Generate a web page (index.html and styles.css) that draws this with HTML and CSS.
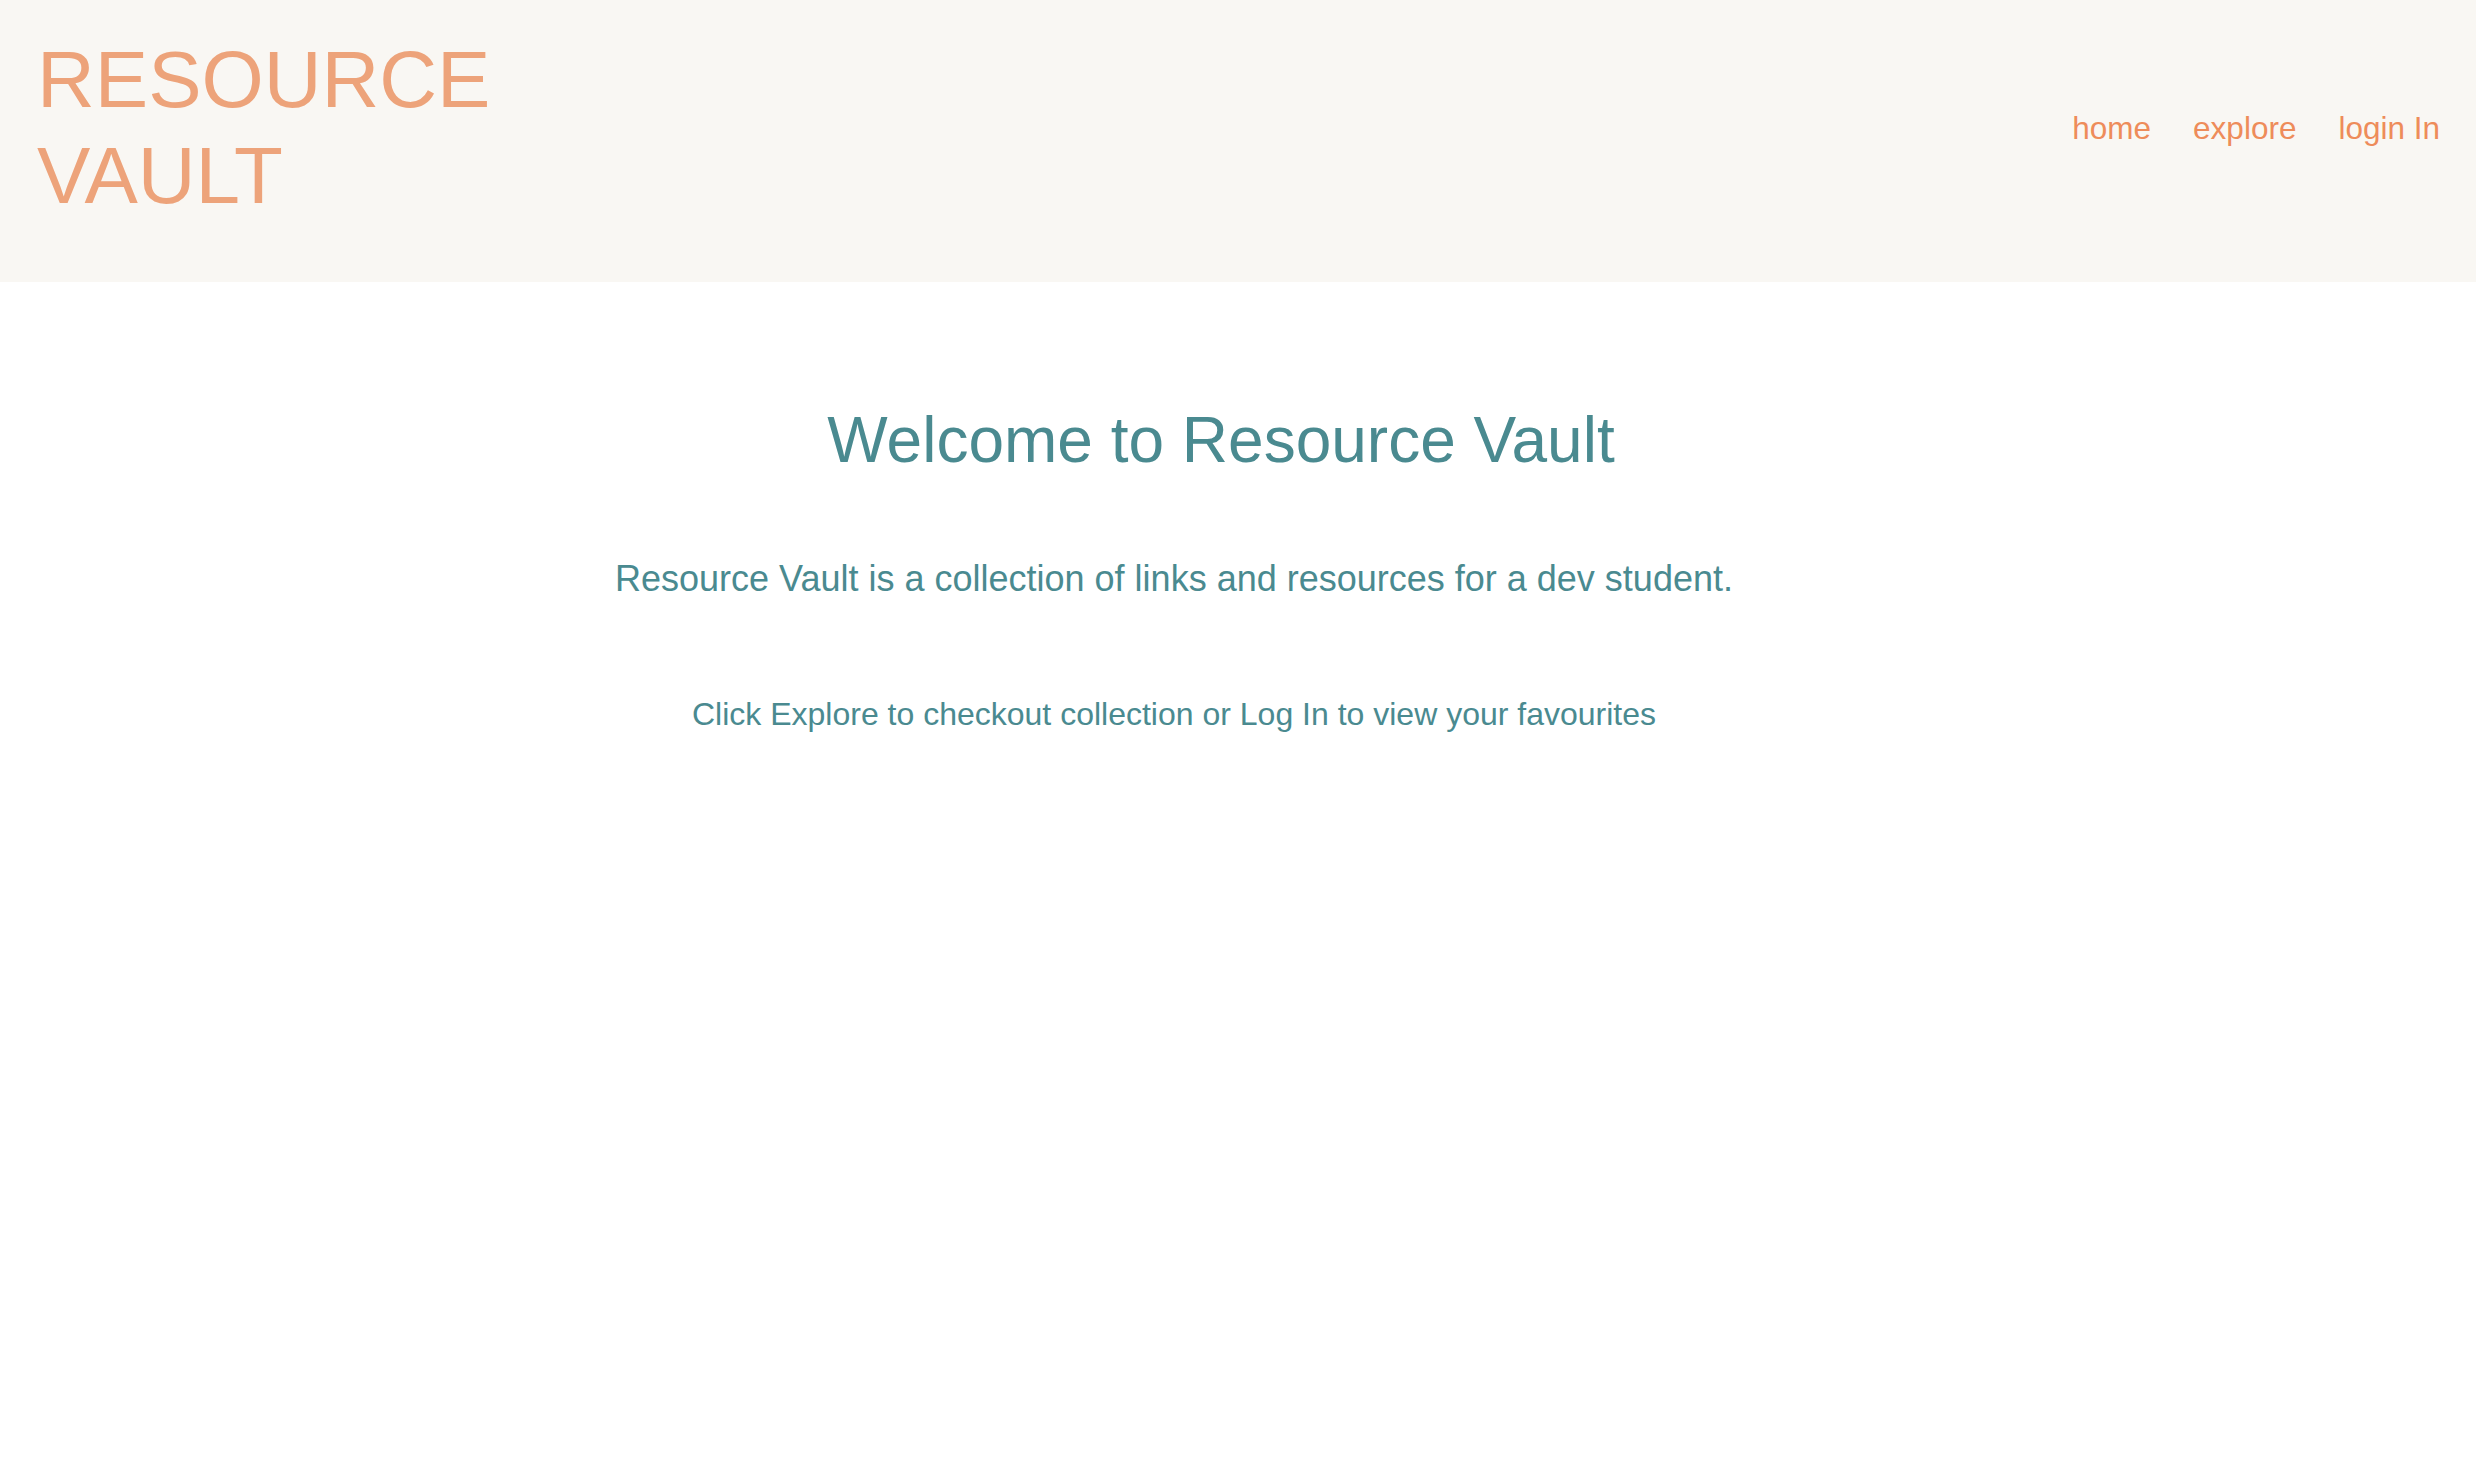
FILE: index.html
```html
<!DOCTYPE html>
<html lang="en">
<head>
<meta charset="utf-8">
<title>Resource Vault</title>
<link rel="stylesheet" href="styles.css">
</head>
<body>
<header class="site-header">
  <div class="logo">RESOURCE<br>VAULT</div>
  <nav class="nav">
    <a class="nav-link" href="#">home</a>
    <a class="nav-link" href="#">explore</a>
    <a class="nav-link" href="#">login In</a>
  </nav>
</header>
<main class="intro">
  <h1 class="intro-title">Welcome to Resource Vault</h1>
  <p class="intro-lead">Resource Vault is a collection of links and resources for a dev student.</p>
  <p class="intro-note">Click Explore to checkout collection or Log In to view your favourites</p>
</main>
</body>
</html>
```

FILE: styles.css
```css
html, body {
  margin: 0;
  padding: 0;
  background: #ffffff;
}

body {
  font-family: "Liberation Sans", Arial, Helvetica, sans-serif;
}

.site-header {
  display: flex;
  justify-content: space-between;
  align-items: flex-start;
  height: 282px;
  box-sizing: border-box;
  padding: 32px 36px 0 37px;
  background: #f9f7f3;
}

.logo {
  font-size: 80px;
  line-height: 96px;
  color: #eda37a;
}

.nav {
  display: flex;
  gap: 42px;
  margin-top: 78px;
}

.nav-link {
  font-size: 31.5px;
  line-height: 36px;
  color: #ee8c5a;
  text-decoration: none;
}

.intro {
  text-align: center;
  color: #4a8a90;
}

.intro-title {
  margin: 120px 0 0 0;
  padding-right: 34px;
  font-size: 64px;
  font-weight: normal;
  line-height: 76.8px;
}

.intro-lead {
  margin: 78px 0 0 0;
  padding-right: 128px;
  font-size: 36px;
  line-height: 43.2px;
}

.intro-note {
  margin: 95px 0 0 0;
  padding-right: 128px;
  font-size: 32px;
  line-height: 38.4px;
}
```
